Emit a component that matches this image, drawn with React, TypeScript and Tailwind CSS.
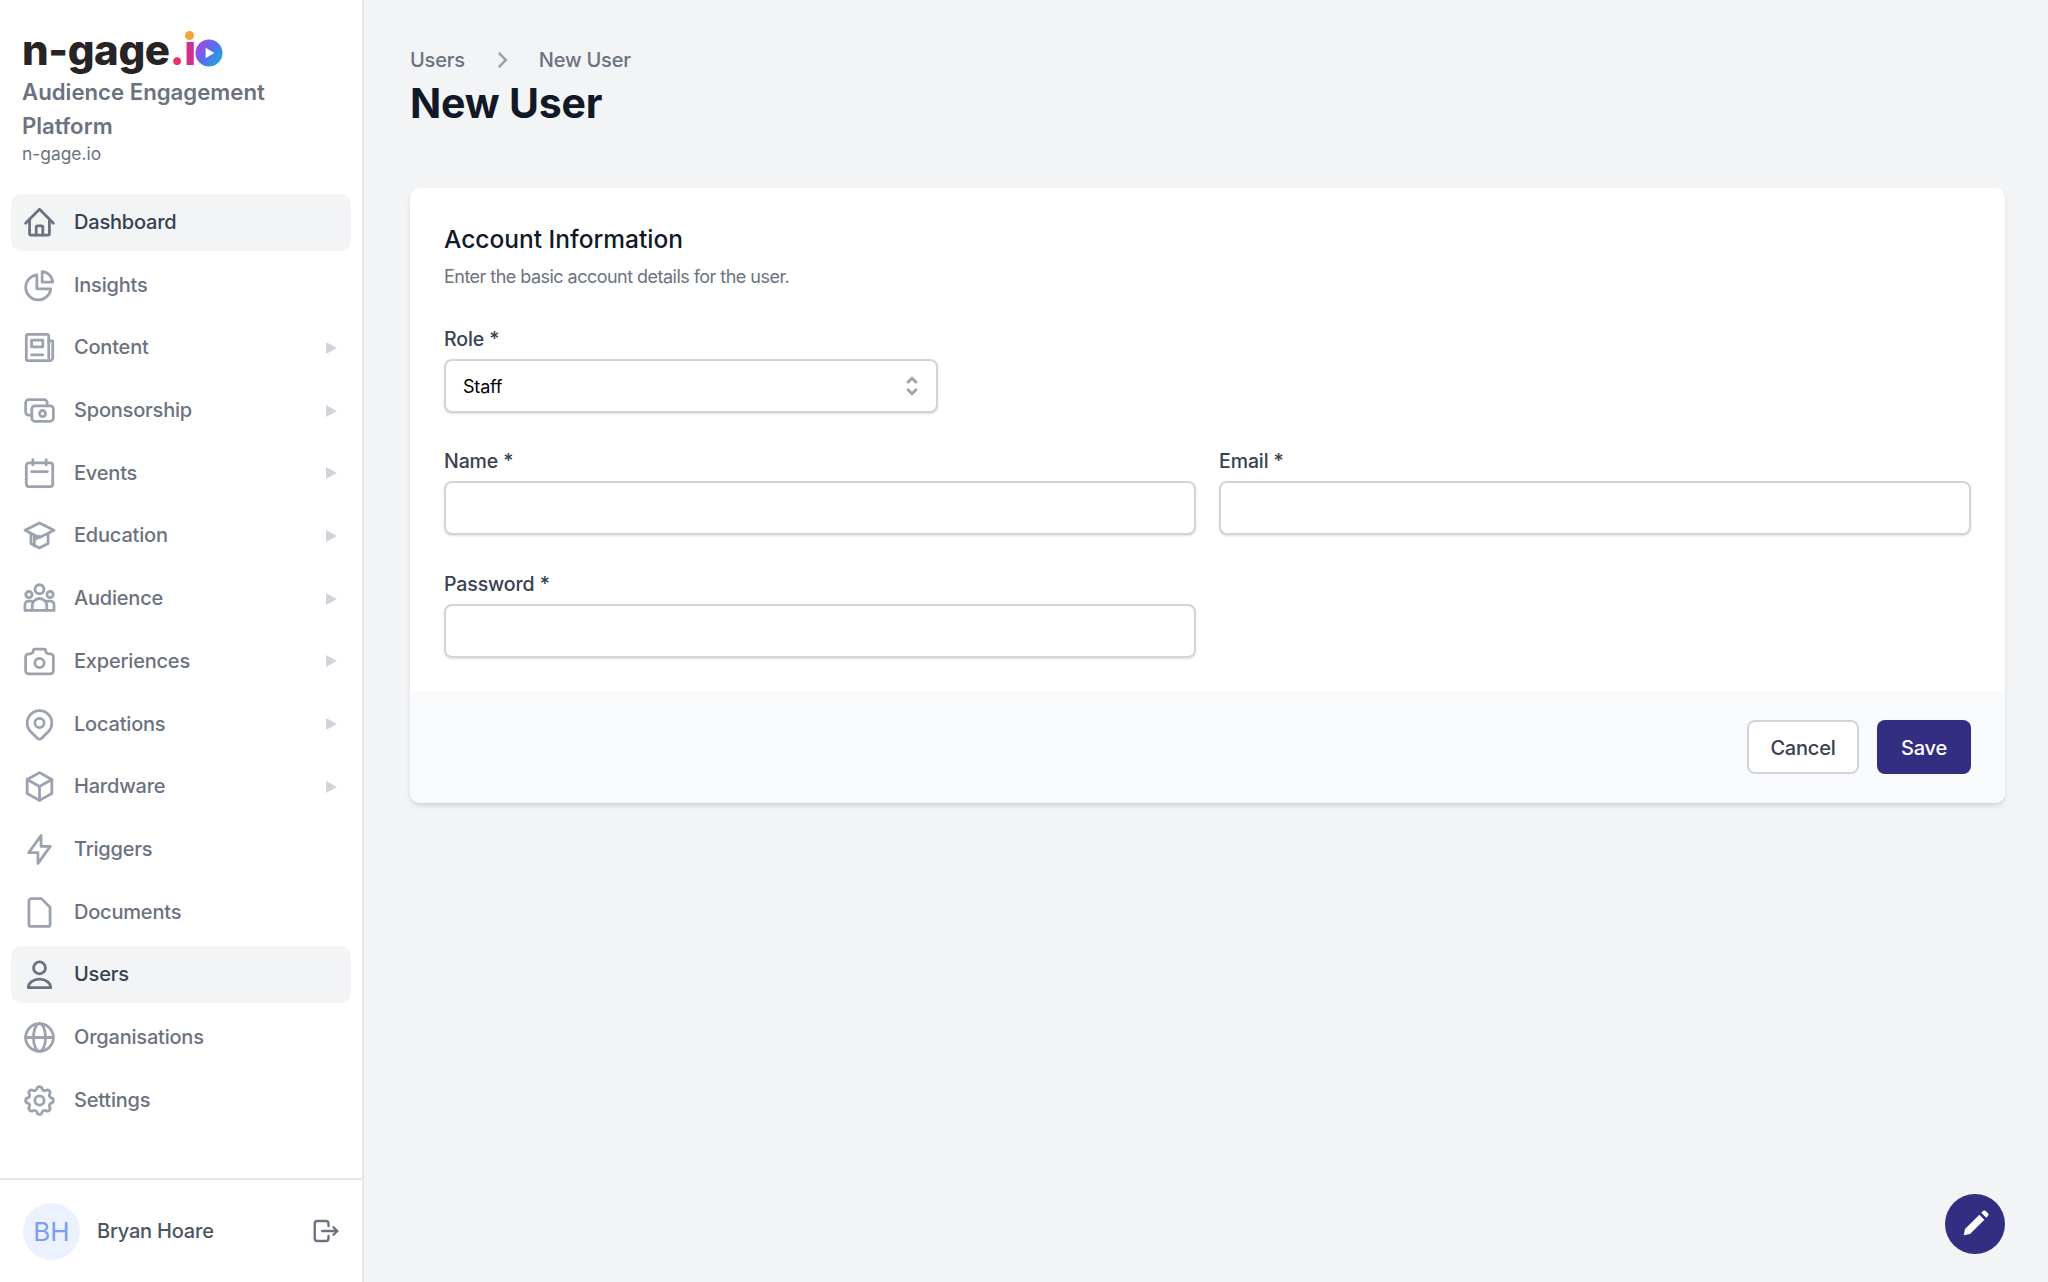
import React from "react";
import { TbCash, TbCamera, TbMapPin, TbBox, TbBolt, TbSettings, TbLogout } from "react-icons/tb";

function CustomIcon({ className, children }: { className?: string; children: React.ReactNode }) {
  return (
    <svg viewBox="-2 -2 28 28" className={className} fill="none" stroke="currentColor" strokeWidth="2.1" strokeLinecap="round" strokeLinejoin="round">
      {children}
    </svg>
  );
}

const HomeIcon = ({ className }: { className?: string }) => (
  <CustomIcon className={className}>
    <path d="M1.5 12.5L12 2l10.5 10.5" />
    <path d="M4.5 10v10.5a1 1 0 0 0 1 1h13a1 1 0 0 0 1-1V10" />
    <path d="M9.5 21.5v-6a1 1 0 0 1 1-1h3a1 1 0 0 1 1 1v6" />
  </CustomIcon>
);
const PieIcon = ({ className }: { className?: string }) => (
  <CustomIcon className={className}>
    <path d="M10 4a9.5 9.5 0 1 0 10.5 10.5H10z" />
    <path d="M14 1.5a8.5 8.5 0 0 1 8 8h-8z" />
  </CustomIcon>
);
const NewsIcon = ({ className }: { className?: string }) => (
  <CustomIcon className={className}>
    <path d="M22 7h-3V3.5A1.5 1.5 0 0 0 17.5 2h-14A1.5 1.5 0 0 0 2 3.5v17A1.5 1.5 0 0 0 3.5 22h16a2.5 2.5 0 0 0 2.5-2.5z" />
    <path d="M19 7v13" />
    <path d="M6 6.5h8.5v5H6z" />
    <path d="M6 17.5h8.5" />
  </CustomIcon>
);
const CalendarIcon = ({ className }: { className?: string }) => (
  <CustomIcon className={className}>
    <rect x="2" y="4" width="20" height="18" rx="2" />
    <path d="M7 1.5v4M17 1.5v4" />
    <path d="M6 10.5h12" />
  </CustomIcon>
);
const EducationIcon = ({ className }: { className?: string }) => (
  <CustomIcon className={className}>
    <path d="M12 2.5L1 8l11 5.5L23 8z" />
    <path d="M5.5 10.5V18l6.5 3.5 6.5-3.5v-7.500" />
    <path d="M8 15.5l4-3M8 13v7" />
  </CustomIcon>
);
const AudienceIcon = ({ className }: { className?: string }) => (
  <CustomIcon className={className}>
    <circle cx="12" cy="5" r="3.4" />
    <circle cx="4" cy="9" r="2.4" />
    <circle cx="20" cy="9" r="2.4" />
    <path d="M6.5 21v-3.5a5.5 5.5 0 0 1 11 0V21" />
    <path d="M6.5 14h-3A2.5 2.5 0 0 0 1 16.5V21h22v-4.5a2.5 2.5 0 0 0-2.5-2.5h-3" />
  </CustomIcon>
);
const DocumentIcon = ({ className }: { className?: string }) => (
  <CustomIcon className={className}>
    <path d="M6 1.5h7.5L20 8v13a1.5 1.5 0 0 1-1.5 1.5h-13A1.5 1.5 0 0 1 4 21V3.5a2 2 0 0 1 2-2z" />
  </CustomIcon>
);
const UserIcon = ({ className }: { className?: string }) => (
  <CustomIcon className={className}>
    <circle cx="12" cy="7" r="4.5" />
    <path d="M3.5 22a8.5 6.5 0 0 1 17 0z" />
  </CustomIcon>
);
const GlobeIcon = ({ className }: { className?: string }) => (
  <CustomIcon className={className}>
    <circle cx="12" cy="12" r="10.5" />
    <ellipse cx="12" cy="12" rx="4.6" ry="10.5" />
    <path d="M1.5 12h21" />
  </CustomIcon>
);

const navItems = [
  { label: "Dashboard", icon: HomeIcon, active: true },
  { label: "Insights", icon: PieIcon },
  { label: "Content", icon: NewsIcon, arrow: true },
  { label: "Sponsorship", icon: TbCash, tabler: true, arrow: true },
  { label: "Events", icon: CalendarIcon, arrow: true },
  { label: "Education", icon: EducationIcon, arrow: true },
  { label: "Audience", icon: AudienceIcon, arrow: true },
  { label: "Experiences", icon: TbCamera, tabler: true, arrow: true },
  { label: "Locations", icon: TbMapPin, tabler: true, arrow: true },
  { label: "Hardware", icon: TbBox, tabler: true, arrow: true },
  { label: "Triggers", icon: TbBolt, tabler: true },
  { label: "Documents", icon: DocumentIcon },
  { label: "Users", icon: UserIcon, active: true },
  { label: "Organisations", icon: GlobeIcon },
  { label: "Settings", icon: TbSettings, tabler: true },
];

function Logo() {
  return (
    <div className="flex items-end h-[50px] text-[42px] leading-[50px] font-extrabold tracking-[-0.4px] text-[#262424]">
      <span>n-gage</span>
      <span className="text-[#ea2f6b]">.</span>
      <span className="relative text-[#cf2f8f]">
        ı
        <span className="absolute left-[1px] top-[6px] w-[9px] h-[9px] rounded-full bg-[#f9a03f]" />
      </span>
      <svg width="28" height="28" viewBox="0 0 29 29" className="mb-[8px] -ml-[1px]">
        <defs>
          <linearGradient id="logoO" x1="0" y1="0" x2="1" y2="0.7">
            <stop offset="0" stopColor="#c43bd6" />
            <stop offset="0.55" stopColor="#5a6cf0" />
            <stop offset="1" stopColor="#22a7d8" />
          </linearGradient>
        </defs>
        <circle cx="14.5" cy="14.5" r="14" fill="url(#logoO)" />
        <path d="M11 9l9 5.5-9 5.5z" fill="#fff" />
      </svg>
    </div>
  );
}

function NavRow({ item }: { item: (typeof navItems)[number] }) {
  const Icon = item.icon as any;
  const iconClass = item.active ? "w-[37px] h-[37px] text-[#6b7280] shrink-0" : "w-[37px] h-[37px] text-[#9ca3af] shrink-0";
  return (
    <div className={item.active
      ? "flex items-center h-[57px] rounded-[10px] bg-[#f3f4f6] pl-[10px] pr-[14px] text-[#374151]"
      : "flex items-center h-[57px] rounded-[10px] pl-[10px] pr-[14px] text-[#6b7280]"}>
      {item.tabler ? <Icon className={iconClass} strokeWidth={1.8} /> : <Icon className={iconClass} />}
      <span className="ml-[16px] pb-[1px] text-[20px] tracking-[-0.2px] font-medium">{item.label}</span>
      {item.arrow && (
        <span className="ml-auto w-0 h-0 border-y-[6px] border-y-transparent border-l-[11px] border-l-[#d1d5db]" />
      )}
    </div>
  );
}

function Field({ label, className }: { label: string; className?: string }) {
  return (
    <div className={className}>
      <label className="block text-[19.5px] leading-[24px] font-medium tracking-[-0.1px] text-[#374151]">{label}</label>
      <div className="mt-[8px] h-[54px] rounded-[8px] bg-white border-2 border-[#d1d5db] shadow-sm" />
    </div>
  );
}

export default function App() {
  return (
    <div className="flex h-[1282px] bg-[#f3f4f6] font-['Inter',sans-serif] overflow-hidden">
      <aside className="w-[364px] shrink-0 flex flex-col bg-white border-r-2 border-[#e5e7eb]">
        <div className="pt-[25px] px-[22px]">
          <Logo />
          <div className="text-[22.2px] leading-[34px] font-semibold text-[#6b7280]">Audience Engagement Platform</div>
          <div className="-mt-[2px] text-[17.4px] leading-[26px] text-[#6b7280]">n-gage.io</div>
        </div>
        <nav className="mt-[27px] px-[11px] flex flex-col gap-[5.7px]">
          {navItems.map((item) => <NavRow key={item.label} item={item} />)}
        </nav>
        <div className="mt-auto h-[104px] border-t-2 border-[#e5e7eb] flex items-center pl-[23px] pr-[21px]">
          <div className="w-[57px] h-[57px] rounded-full bg-[#ebf2fe] flex items-center justify-center text-[26px] text-[#7c9df5]">BH</div>
          <span className="ml-[17px] pb-[1px] text-[20px] tracking-[-0.2px] font-medium text-[#4b5563]">Bryan Hoare</span>
          <TbLogout className="ml-auto w-[30px] h-[30px] text-[#6b7280]" strokeWidth={1.9} />
        </div>
      </aside>
      <main className="flex-1 pl-[46px] pr-[43px] pt-[46px]">
        <div className="flex items-center h-[28px] text-[20px] tracking-[-0.2px] font-medium text-[#6b7280]">
          <span>Users</span>
          <svg viewBox="0 0 20 20" className="mx-[24px] w-[26px] h-[26px] text-[#9ca3af]" fill="none" stroke="currentColor" strokeWidth="2"><path d="M7.5 4.5l5.5 5.5-5.5 5.5" /></svg>
          <span>New User</span>
        </div>
        <h1 className="mt-[1px] text-[41px] leading-[56px] tracking-[-0.2px] font-bold text-[#111827]">New User</h1>
        <div className="mt-[57px] rounded-[10px] bg-white shadow-md">
          <div className="px-[34px] pt-[34px] pb-[33px]">
            <h2 className="text-[24.5px] leading-[34px] font-medium text-[#111827]">Account Information</h2>
            <p className="mt-[8px] text-[18px] leading-[26px] tracking-[-0.53px] text-[#6b7280]">Enter the basic account details for the user.</p>
            <div className="mt-[37px] w-[494px]">
              <label className="block text-[19.5px] leading-[24px] font-medium tracking-[-0.1px] text-[#374151]">Role *</label>
              <div className="mt-[8px] h-[54px] rounded-[8px] bg-white border-2 border-[#d1d5db] shadow-sm flex items-center justify-between pl-[17px] pr-[12px]">
                <span className="text-[18px] tracking-[-0.2px] text-black">Staff</span>
                <svg viewBox="0 0 20 20" className="w-[24px] h-[26px] text-[#9ca3af]" fill="none" stroke="currentColor" strokeWidth="2.4"><path d="M6 7.5l4-4 4 4M6 12.5l4 4 4-4" /></svg>
              </div>
            </div>
            <div className="mt-[36px] grid grid-cols-2 gap-x-[23px] gap-y-[37px]">
              <Field label="Name *" />
              <Field label="Email *" />
              <Field label="Password *" />
            </div>
          </div>
          <div className="h-[112px] rounded-b-[10px] bg-[#f9fafb] flex items-center justify-end gap-[18px] pr-[34px]">
            <button className="h-[54px] w-[112px] pt-[1px] rounded-[8px] bg-white border-2 border-[#d1d5db] text-[20px] tracking-[-0.2px] font-medium text-[#374151]">Cancel</button>
            <button className="h-[54px] w-[94px] pt-[1px] rounded-[8px] bg-[#332e81] text-[20px] tracking-[-0.2px] font-medium text-white">Save</button>
          </div>
        </div>
      </main>
      <button className="fixed left-[1945px] top-[1194px] w-[60px] h-[60px] rounded-full bg-[#332e81] flex items-center justify-center">
        <svg viewBox="0 0 24 24" className="w-[30px] h-[30px]" fill="#fff"><path d="M3 21l1-5L15.5 4.5l4 4L8 20z" /><path d="M17 3l1-1a2 2 0 0 1 3 0l1 1a2 2 0 0 1 0 3l-1 1z" /></svg>
      </button>
    </div>
  );
}
